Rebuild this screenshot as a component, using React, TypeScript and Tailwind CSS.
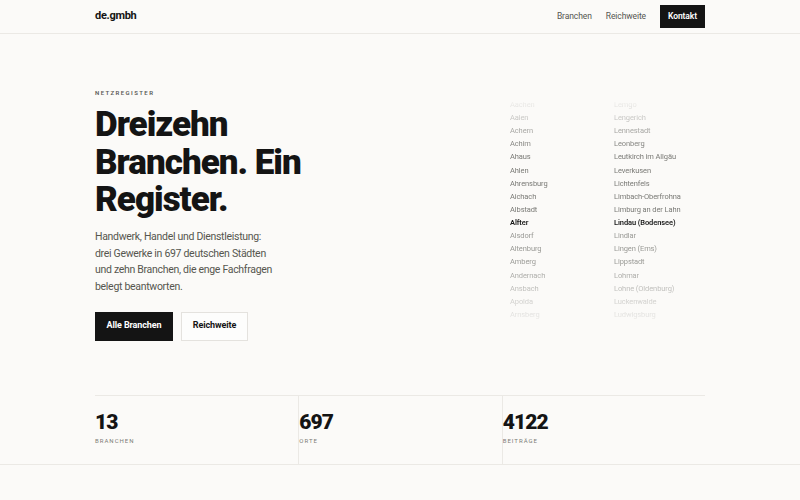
import React from 'react';

const left = ['Aachen', 'Aalen', 'Achern', 'Achim', 'Ahaus', 'Ahlen', 'Ahrensburg', 'Aichach', 'Albstadt', 'Alfter', 'Alsdorf', 'Altenburg', 'Amberg', 'Andernach', 'Ansbach', 'Apolda', 'Arnsberg'];
const right = ['Lemgo', 'Lengerich', 'Lennestadt', 'Leonberg', 'Leutkirch im Allgäu', 'Leverkusen', 'Lichtenfels', 'Limbach-Oberfrohna', 'Limburg an der Lahn', 'Lindau (Bodensee)', 'Lindlar', 'Lingen (Ems)', 'Lippstadt', 'Lohmar', 'Lohne (Oldenburg)', 'Luckenwalde', 'Ludwigsburg'];
const ACTIVE = 9;

const stats = [
  { value: '13', label: 'Branchen' },
  { value: '697', label: 'Orte' },
  { value: '4122', label: 'Beiträge' },
];

const CityColumn = ({ items }: { items: string[] }) => (
  <ul className="flex flex-col">
    {items.map((name, i) => (
      <li
        key={name}
        className={
          i === ACTIVE
            ? 'h-[13.15px] leading-[13.15px] font-semibold text-[#1a1a1a]'
            : i < ACTIVE
            ? 'h-[13.15px] leading-[13.15px] text-[#7a7a76]'
            : 'h-[13.15px] leading-[13.15px] text-[#9a9a96]'
        }
      >
        {name}
      </li>
    ))}
  </ul>
);

const App: React.FC = () => {
  return (
    <div className="min-h-[500px] bg-[#fbfaf8] text-[#141414] font-['Roboto','Liberation_Sans',sans-serif]">
      <header className="h-[34px] border-b border-[#ebe9e5]">
        <div className="mx-auto flex h-full w-[610px] items-center justify-between">
          <span className="text-[11px] font-bold tracking-[-0.3px]">de.gmbh</span>
          <nav className="flex items-center gap-[14px] text-[8.5px] tracking-[-0.1px] text-[#555551]">
            <span>Branchen</span>
            <span>Reichweite</span>
            <span className="flex h-[23px] w-[45px] items-center justify-center bg-[#141414] font-semibold text-white">Kontakt</span>
          </nav>
        </div>
      </header>

      <main className="mx-auto w-[610px]">
        <section className="grid h-[361px] grid-cols-[415px_1fr] items-center">
          <div>
            <p className="text-[6px] font-semibold tracking-[1.4px] text-[#5b5b57]">NETZREGISTER</p>
            <h1 className="mt-[9px] text-[35px] font-black leading-[37.5px] tracking-[-1px]">
              Dreizehn
              <br />
              Branchen. Ein
              <br />
              Register.
            </h1>
            <p className="mt-[10px] text-[10.5px] leading-[16.7px] tracking-[-0.3px] text-[#56564f]">
              Handwerk, Handel und Dienstleistung:
              <br />
              drei Gewerke in 697 deutschen Städten
              <br />
              und zehn Branchen, die enge Fachfragen
              <br />
              belegt beantworten.
            </p>
            <div className="mt-[16px] flex gap-[8px] text-[9px] font-bold tracking-[-0.1px]">
              <button className="h-[29px] w-[78px] bg-[#141414] text-white">Alle Branchen</button>
              <button className="h-[29px] w-[67px] border border-[#e4e2de] bg-[#fdfdfc]">Reichweite</button>
            </div>
          </div>

          <div className="grid grid-cols-[104px_1fr] pb-[10px] text-[7.5px] tracking-[-0.1px] [mask-image:linear-gradient(to_bottom,transparent_0%,black_22%,black_70%,transparent_100%)]">
            <CityColumn items={left} />
            <CityColumn items={right} />
          </div>
        </section>

        <section className="grid h-[69px] grid-cols-3 border-t border-[#ebe9e5]">
          {stats.map((s, i) => (
            <div key={s.label} className={i === 0 ? 'pt-[15px]' : 'border-l border-[#ebe9e5] pt-[15px]'}>
              <div className="text-[21px] font-black leading-[22px] tracking-[-0.9px]">{s.value}</div>
              <div className="mt-[3px] text-[6px] uppercase tracking-[1px] text-[#7b7b77]">{s.label}</div>
            </div>
          ))}
        </section>
      </main>
      <div className="border-t border-[#ebe9e5]" />
    </div>
  );
};

export default App;
